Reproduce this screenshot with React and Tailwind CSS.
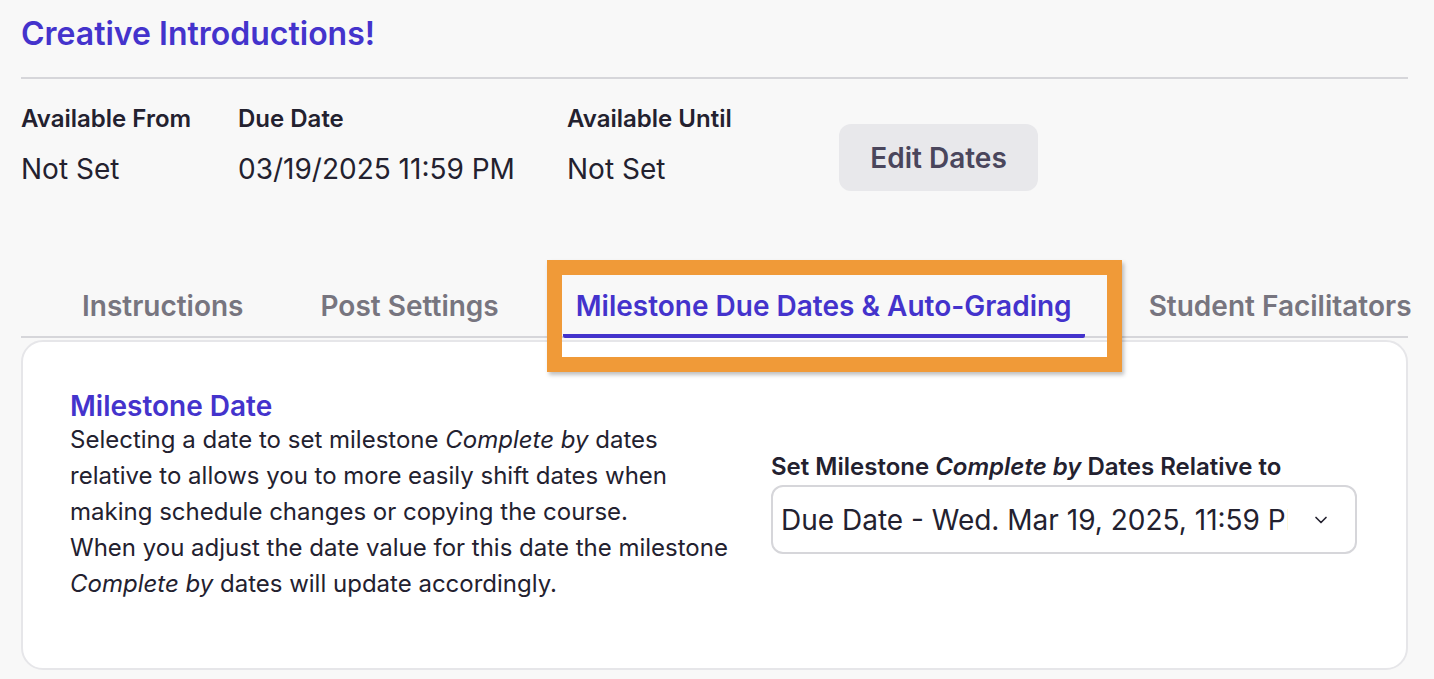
import { ChevronDown } from "lucide-react";

const fechas = [
    { label: "Available From", value: "Not Set", w: "w-[217px]" },
    { label: "Due Date", value: "03/19/2025 11:59 PM", w: "w-[329px]" },
    { label: "Available Until", value: "Not Set", w: "w-[272px]" },
];

const tabs = ["Instructions", "Post Settings", "Milestone Due Dates & Auto-Grading", "Student Facilitators"];

export default function App() {
    const tabActiva = 2;

    return (
        <div className="relative min-h-screen bg-[#f8f8f8] pl-[21px] pr-[26px] pt-[14px] font-['Inter',sans-serif] text-[#23212f]">
            <h1 className="text-[32px] leading-[40px] font-semibold text-[#4433cc]">Creative Introductions!</h1>
            <div className="mt-[23px] h-[2px] bg-[#d6d6da]" />

            {/* --- FECHAS --- */}
            <div className="flex items-start mt-[26px]">
                {fechas.map((f) => (
                    <div key={f.label} className={f.w}>
                        <p className="text-[24px] leading-[28px] font-semibold">{f.label}</p>
                        <p className="mt-[20px] text-[28px] leading-[32px]">{f.value}</p>
                    </div>
                ))}
                <button className="mt-[19px] h-[67px] w-[199px] rounded-[12px] bg-[#e8e8eb] text-[28px] font-semibold text-[#4a465c]">
                    Edit Dates
                </button>
            </div>

            {/* --- TABS --- */}
            <div className="mt-[99px] flex gap-[51px] pl-[48px] border-b-2 border-[#d6d6da] whitespace-nowrap">
                {tabs.map((t, i) => (
                    <div
                        key={t}
                        className={`px-[13px] pb-[12px] text-[28px] leading-[32px] font-semibold -mb-[2px] border-b-4 ${i === tabActiva ? "text-[#4433cc] border-[#4433cc] rounded-b-[2px]" : "text-[#77757f] border-transparent"
                            }`}
                    >
                        {t}
                    </div>
                ))}
            </div>

            {/* --- CARD --- */}
            <div className="mt-[2px] flex rounded-[22px] border-2 border-[#e6e6e9] bg-white pl-[47px] pt-[48px] pb-[66px]">
                <div className="w-[701px]">
                    <h2 className="text-[28px] leading-[32px] font-semibold text-[#4433cc]">Milestone Date</h2>
                    <p className="text-[24px] leading-[36px]">
                        Selecting a date to set milestone <em>Complete by</em> dates
                        <br />
                        relative to allows you to more easily shift dates when
                        <br />
                        making schedule changes or copying the course.
                        <br />
                        When you adjust the date value for this date the milestone
                        <br />
                        <em>Complete by</em> dates will update accordingly.
                    </p>
                </div>
                <div className="mt-[63px] w-[586px]">
                    <p className="text-[24px] leading-[28px] font-semibold">
                        Set Milestone <em>Complete by</em> Dates Relative to
                    </p>
                    <div className="mt-[4px] flex h-[69px] items-center rounded-[12px] border-2 border-[#d6d6da] bg-white pl-[8px] pr-[24px]">
                        <span className="w-[507px] overflow-hidden whitespace-nowrap text-[28px] leading-[32px]">
                            Due Date - Wed. Mar 19, 2025, 11:59 PM
                        </span>
                        <ChevronDown size={20} strokeWidth={2} className="ml-auto text-[#23212f]" />
                    </div>
                </div>
            </div>

            {/* marco de resaltado */}
            <div className="absolute left-[547px] top-[260px] h-[112px] w-[575px] border-[15px] border-[#f09a38] shadow-[2px_3px_4px_rgba(0,0,0,0.25)] pointer-events-none" />
        </div>
    );
}
